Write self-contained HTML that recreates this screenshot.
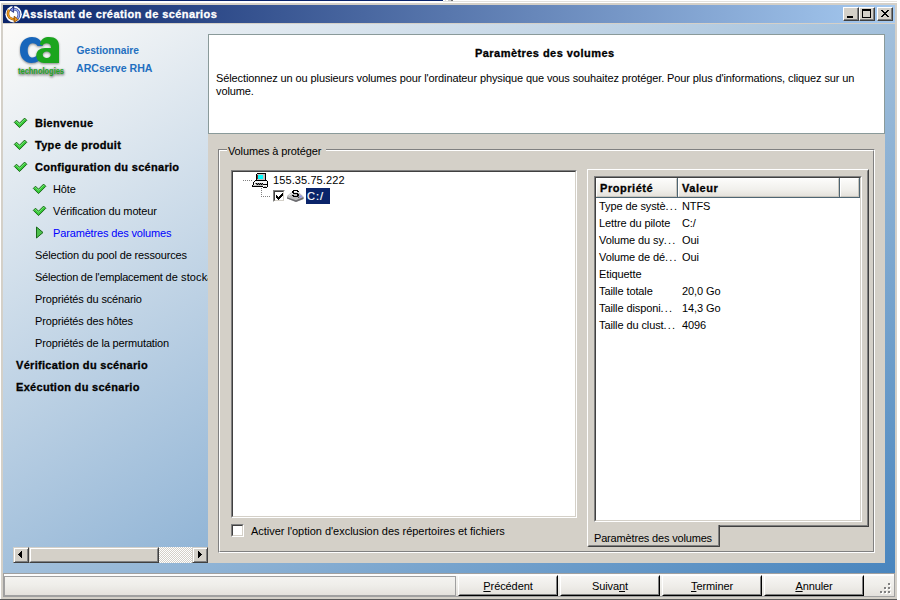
<!DOCTYPE html>
<html><head><meta charset="utf-8">
<style>
*{margin:0;padding:0;box-sizing:border-box}
html,body{width:900px;height:600px;overflow:hidden;background:#fff;position:relative}
body{font-family:"Liberation Sans",sans-serif;font-size:11px;color:#000}
.a{position:absolute}
.t{position:absolute;white-space:nowrap;line-height:13px;font-size:11px}
.b{font-weight:bold;-webkit-text-stroke:0.3px currentColor}
.sbtn{width:16px;height:16px;background:#d4d0c8;border:1px solid;border-color:#d4d0c8 #404040 #404040 #d4d0c8;box-shadow:inset 1px 1px #fff,inset -1px -1px #808080}
.tbtn{width:16px;height:14px;background:#d4d0c8;border:1px solid;border-color:#fff #404040 #404040 #fff;box-shadow:inset -1px -1px #808080}
</style></head><body>
<!-- top stray line -->
<div class="a" style="left:0;top:0;width:443px;height:1px;background:#0a246a"></div>
<div class="a" style="left:445px;top:0;width:1px;height:1px;background:#e0e0e0"></div>
<div class="a" style="left:448px;top:0;width:3px;height:1px;background:#c8c8c8"></div>
<div class="a" style="left:451px;top:0;width:2px;height:1px;background:#707070"></div>
<div class="a" style="left:443px;top:1px;width:454px;height:1px;background:#e4e2de"></div>
<!-- window frame -->
<div class="a" style="left:1px;top:3px;width:896px;height:596px;background:#d4d0c8"></div>
<div class="a" style="left:0;top:599px;width:897px;height:1px;background:#5a5a5a"></div>
<!-- title bar -->
<div class="a" style="left:3px;top:5px;width:892px;height:18px;background:linear-gradient(to right,#0a246a,#a6caf0)"></div>
<!-- client gradient -->
<div class="a" id="client" style="left:3px;top:24px;width:892px;height:549px;background:linear-gradient(to bottom right,#fcfbf9,#4985be)"></div>

<!-- logo -->
<svg class="a" style="left:0;top:24px" width="200" height="70" viewBox="0 24 200 70">
<defs>
<filter id="sh" x="-20%" y="-20%" width="140%" height="140%"><feGaussianBlur stdDeviation="0.9"/></filter>
</defs>
<g transform="translate(0,1)" opacity="0.55" filter="url(#sh)" fill="#333"><path d="M42.7 46 L37.5 46 C36.5 44.3 35 43.3 32.5 43.3 C29.5 43.3 27.7 46.5 27.7 50.4 C27.7 54.5 29.5 57.5 32.5 57.5 C34.5 57.5 36 56.5 37 55 L42.7 55 C41.5 60 37 63 31.5 63 C24.5 63 20 57.5 20 50 C20 42 25 37 32 37 C37.5 37 41.5 40 42.7 46 Z"/><path d="M39.8 44.5 C41 38.5 45 37 49 37 C55.5 37 59 40 59 46 L59 63 L51 63 L51 47.5 C51 44.5 49 43.3 46.5 43.3 C44.5 43.3 43 44.2 42.6 45.8 Z"/><path fill-rule="evenodd" d="M51.5 48.1 L45 48.1 C40 48.1 36.3 51 36.3 55.6 C36.3 60.5 40 63 44 63 L51.5 63 Z M46.8 51.6 C49 51.6 50.8 53 50.8 54.8 C50.8 56.6 49 58 46.8 58 C44.4 58 42.7 56.6 42.7 54.8 C42.7 53 44.4 51.6 46.8 51.6 Z"/></g>
<g fill="#1766bb"><path d="M42.7 46 L37.5 46 C36.5 44.3 35 43.3 32.5 43.3 C29.5 43.3 27.7 46.5 27.7 50.4 C27.7 54.5 29.5 57.5 32.5 57.5 C34.5 57.5 36 56.5 37 55 L42.7 55 C41.5 60 37 63 31.5 63 C24.5 63 20 57.5 20 50 C20 42 25 37 32 37 C37.5 37 41.5 40 42.7 46 Z"/></g>
<g fill="#1ba51e"><path d="M39.8 44.5 C41 38.5 45 37 49 37 C55.5 37 59 40 59 46 L59 63 L51 63 L51 47.5 C51 44.5 49 43.3 46.5 43.3 C44.5 43.3 43 44.2 42.6 45.8 Z"/><path fill-rule="evenodd" d="M51.5 48.1 L45 48.1 C40 48.1 36.3 51 36.3 55.6 C36.3 60.5 40 63 44 63 L51.5 63 Z M46.8 51.6 C49 51.6 50.8 53 50.8 54.8 C50.8 56.6 49 58 46.8 58 C44.4 58 42.7 56.6 42.7 54.8 C42.7 53 44.4 51.6 46.8 51.6 Z"/></g>
<filter id="sh2" x="-20%" y="-50%" width="140%" height="200%"><feGaussianBlur stdDeviation="0.9"/></filter>
<text x="18.5" y="74.5" font-family="Liberation Sans" font-weight="bold" font-size="9.5" textLength="46" lengthAdjust="spacingAndGlyphs" fill="#333" opacity="0.55" filter="url(#sh2)" stroke="#333" stroke-width="1">technologies</text>
<text x="18" y="73.6" font-family="Liberation Sans" font-weight="bold" font-size="9.5" textLength="46" lengthAdjust="spacingAndGlyphs" fill="#22a525">technologies</text>
<text x="76.5" y="54" font-family="Liberation Sans" font-weight="bold" font-size="11.3" textLength="62.5" lengthAdjust="spacingAndGlyphs" fill="#1f6fc0">Gestionnaire</text>
<text x="76" y="71.6" font-family="Liberation Sans" font-weight="bold" font-size="11.5" textLength="76.5" lengthAdjust="spacingAndGlyphs" fill="#1f6fc0">ARCserve RHA</text>
</svg>
<!-- left nav -->
<div class="t b" style="left:35px;top:117px;color:#000;letter-spacing:0.3px">Bienvenue</div>
<svg class="a" style="left:12px;top:117px" width="16" height="14" viewBox="0 0 16 14"><path d="M2.3 5.4 L4.5 3.2 L7.5 6.2 L12.6 1.1 L14.8 3.3 L7.5 10.6 Z" fill="#36c836" stroke="#1b6b1b" stroke-width="1" stroke-linejoin="miter"/><path d="M3.6 5.3 L4.5 4.4 L7.5 7.4 L12.6 2.3 L13.4 3.1" fill="none" stroke="#80ea80" stroke-width="0.9"/></svg>
<div class="t b" style="left:35px;top:139px;color:#000;letter-spacing:0.3px">Type de produit</div>
<svg class="a" style="left:12px;top:139px" width="16" height="14" viewBox="0 0 16 14"><path d="M2.3 5.4 L4.5 3.2 L7.5 6.2 L12.6 1.1 L14.8 3.3 L7.5 10.6 Z" fill="#36c836" stroke="#1b6b1b" stroke-width="1" stroke-linejoin="miter"/><path d="M3.6 5.3 L4.5 4.4 L7.5 7.4 L12.6 2.3 L13.4 3.1" fill="none" stroke="#80ea80" stroke-width="0.9"/></svg>
<div class="t b" style="left:35px;top:161px;color:#000;letter-spacing:0.3px">Configuration du scénario</div>
<svg class="a" style="left:12px;top:161px" width="16" height="14" viewBox="0 0 16 14"><path d="M2.3 5.4 L4.5 3.2 L7.5 6.2 L12.6 1.1 L14.8 3.3 L7.5 10.6 Z" fill="#36c836" stroke="#1b6b1b" stroke-width="1" stroke-linejoin="miter"/><path d="M3.6 5.3 L4.5 4.4 L7.5 7.4 L12.6 2.3 L13.4 3.1" fill="none" stroke="#80ea80" stroke-width="0.9"/></svg>
<div class="t" style="left:53px;top:183px;color:#000;letter-spacing:-0.15px">Hôte</div>
<svg class="a" style="left:31px;top:183px" width="16" height="14" viewBox="0 0 16 14"><path d="M2.3 5.4 L4.5 3.2 L7.5 6.2 L12.6 1.1 L14.8 3.3 L7.5 10.6 Z" fill="#36c836" stroke="#1b6b1b" stroke-width="1" stroke-linejoin="miter"/><path d="M3.6 5.3 L4.5 4.4 L7.5 7.4 L12.6 2.3 L13.4 3.1" fill="none" stroke="#80ea80" stroke-width="0.9"/></svg>
<div class="t" style="left:53px;top:205px;color:#000;letter-spacing:-0.15px">Vérification du moteur</div>
<svg class="a" style="left:31px;top:205px" width="16" height="14" viewBox="0 0 16 14"><path d="M2.3 5.4 L4.5 3.2 L7.5 6.2 L12.6 1.1 L14.8 3.3 L7.5 10.6 Z" fill="#36c836" stroke="#1b6b1b" stroke-width="1" stroke-linejoin="miter"/><path d="M3.6 5.3 L4.5 4.4 L7.5 7.4 L12.6 2.3 L13.4 3.1" fill="none" stroke="#80ea80" stroke-width="0.9"/></svg>
<div class="t" style="left:53px;top:227px;color:#0000ff;letter-spacing:-0.15px">Paramètres des volumes</div>
<svg class="a" style="left:35px;top:226px" width="10" height="14" viewBox="0 0 10 14"><path d="M1.5 1 L8 6.5 L1.5 12 Z" fill="#4cc04c" stroke="#186818" stroke-width="1"/></svg>
<div class="t" style="left:35px;top:249px;color:#000;letter-spacing:-0.15px">Sélection du pool de ressources</div>
<div class="t" style="left:35px;top:271px;color:#000;letter-spacing:-0.25px">Sélection de l'emplacement <span style="letter-spacing:0.1px">de stockage</span></div>
<div class="t" style="left:35px;top:293px;color:#000;letter-spacing:-0.15px">Propriétés du scénario</div>
<div class="t" style="left:35px;top:315px;color:#000;letter-spacing:-0.15px">Propriétés des hôtes</div>
<div class="t" style="left:35px;top:337px;color:#000;letter-spacing:-0.15px">Propriétés de la permutation</div>
<div class="t b" style="left:16px;top:359px;color:#000;letter-spacing:0.3px">Vérification du scénario</div>
<div class="t b" style="left:16px;top:381px;color:#000;letter-spacing:0.3px">Exécution du scénario</div>
<!-- header box -->
<div class="a" style="left:208px;top:34px;width:677px;height:100px;background:#fff;border:1px solid #8a9a9a"></div>
<!-- gray panel -->
<div class="a" style="left:208px;top:134px;width:677px;height:429px;background:#d4d0c8"></div>

<!-- header text -->
<div class="t b" style="left:475px;top:47px;letter-spacing:0.45px">Paramètres des volumes</div>
<div class="t" style="left:216px;top:72px;letter-spacing:-0.11px">Sélectionnez un ou plusieurs volumes pour l'ordinateur physique que vous souhaitez protéger. Pour plus d'informations, cliquez sur un</div>
<div class="t" style="left:216px;top:85px;letter-spacing:-0.11px">volume.</div>
<!-- group box -->
<div class="a" style="left:218px;top:149px;width:657px;height:404px;border:1px solid #808080;border-right-color:#fff;border-bottom-color:#fff"></div>
<div class="a" style="left:219px;top:150px;width:655px;height:402px;border:1px solid #fff;border-right-color:#808080;border-bottom-color:#808080"></div>
<div class="a" style="left:227px;top:146px;width:99px;height:8px;background:#d4d0c8"></div>
<div class="t" style="left:228px;top:145px;letter-spacing:-0.12px">Volumes à protéger</div>
<!-- tree view -->
<div class="a" style="left:231px;top:170px;width:346px;height:348px;background:#fff;border:1px solid;border-color:#808080 #fff #fff #808080"></div>
<div class="a" style="left:232px;top:171px;width:344px;height:346px;border:1px solid;border-color:#404040 #d4d0c8 #d4d0c8 #404040"></div>
<!-- checkbox exclude -->
<div class="a" style="left:231px;top:524px;width:13px;height:13px;background:#fff;border:1px solid;border-color:#808080 #fff #fff #808080"></div>
<div class="a" style="left:232px;top:525px;width:11px;height:11px;border:1px solid;border-color:#404040 #d4d0c8 #d4d0c8 #404040"></div>
<div class="t" style="left:251px;top:525px;letter-spacing:-0.02px">Activer l'option d'exclusion des répertoires et fichiers</div>
<!-- tree content -->
<svg class="a" style="left:240px;top:172px" width="40" height="30" viewBox="240 172 40 30" shape-rendering="crispEdges">
<g fill="#808080">
<rect x="243" y="180" width="1" height="1"/><rect x="245" y="180" width="1" height="1"/><rect x="247" y="180" width="1" height="1"/><rect x="249" y="180" width="1" height="1"/><rect x="251" y="180" width="1" height="1"/>
<rect x="261" y="188" width="1" height="1"/><rect x="261" y="190" width="1" height="1"/><rect x="261" y="192" width="1" height="1"/><rect x="261" y="194" width="1" height="1"/><rect x="261" y="196" width="1" height="1"/>
<rect x="263" y="196" width="1" height="1"/><rect x="265" y="196" width="1" height="1"/><rect x="267" y="196" width="1" height="1"/><rect x="269" y="196" width="1" height="1"/>
</g>
</svg>
<!-- computer icon -->
<svg class="a" style="left:250px;top:171px" width="18" height="17" viewBox="0 0 18 17" shape-rendering="crispEdges"><path d="M7 2h1v1h-1zM8 2h1v1h-1zM9 2h1v1h-1zM10 2h1v1h-1zM11 2h1v1h-1zM12 2h1v1h-1zM13 2h1v1h-1zM14 2h1v1h-1zM15 2h1v1h-1zM6 3h1v1h-1zM15 3h1v1h-1zM6 4h1v1h-1zM15 4h1v1h-1zM6 5h1v1h-1zM15 5h1v1h-1zM6 6h1v1h-1zM15 6h1v1h-1zM6 7h1v1h-1zM15 7h1v1h-1zM6 8h1v1h-1zM15 8h1v1h-1zM5 9h1v1h-1zM6 9h1v1h-1zM7 9h1v1h-1zM8 9h1v1h-1zM9 9h1v1h-1zM10 9h1v1h-1zM11 9h1v1h-1zM12 9h1v1h-1zM13 9h1v1h-1zM14 9h1v1h-1zM15 9h1v1h-1zM16 9h1v1h-1zM4 10h1v1h-1zM17 10h1v1h-1zM3 11h1v1h-1zM17 11h1v1h-1zM3 12h1v1h-1zM6 12h1v1h-1zM8 12h1v1h-1zM10 12h1v1h-1zM12 12h1v1h-1zM17 12h1v1h-1zM3 13h1v1h-1zM7 13h1v1h-1zM9 13h1v1h-1zM11 13h1v1h-1zM13 13h1v1h-1zM14 13h1v1h-1zM15 13h1v1h-1zM16 13h1v1h-1zM17 13h1v1h-1zM2 14h1v1h-1zM17 14h1v1h-1zM2 15h1v1h-1zM3 15h1v1h-1zM4 15h1v1h-1zM5 15h1v1h-1zM6 15h1v1h-1zM7 15h1v1h-1zM8 15h1v1h-1zM9 15h1v1h-1zM10 15h1v1h-1zM11 15h1v1h-1zM12 15h1v1h-1zM17 15h1v1h-1zM13 16h1v1h-1zM14 16h1v1h-1zM15 16h1v1h-1zM16 16h1v1h-1z" fill="#000"/><path d="M7 3h1v1h-1zM8 3h1v1h-1zM9 3h1v1h-1zM10 3h1v1h-1zM11 3h1v1h-1zM12 3h1v1h-1zM13 3h1v1h-1zM14 3h1v1h-1zM13 4h1v1h-1zM14 4h1v1h-1zM13 5h1v1h-1zM14 5h1v1h-1zM13 6h1v1h-1zM14 6h1v1h-1zM13 7h1v1h-1zM14 7h1v1h-1zM7 8h1v1h-1zM8 8h1v1h-1zM9 8h1v1h-1zM10 8h1v1h-1zM11 8h1v1h-1zM12 8h1v1h-1zM13 8h1v1h-1zM14 8h1v1h-1zM3 14h1v1h-1zM4 14h1v1h-1zM5 14h1v1h-1zM6 14h1v1h-1zM7 14h1v1h-1zM8 14h1v1h-1zM9 14h1v1h-1zM10 14h1v1h-1zM11 14h1v1h-1zM12 14h1v1h-1zM14 15h1v1h-1zM15 15h1v1h-1z" fill="#c0c0c0"/><path d="M7 4h1v1h-1zM7 5h1v1h-1zM7 6h1v1h-1zM7 7h1v1h-1z" fill="#6a3030"/><path d="M8 4h1v1h-1zM9 4h1v1h-1zM10 4h1v1h-1zM11 4h1v1h-1zM12 4h1v1h-1zM8 5h1v1h-1zM9 5h1v1h-1zM10 5h1v1h-1zM11 5h1v1h-1zM12 5h1v1h-1zM8 6h1v1h-1zM9 6h1v1h-1zM10 6h1v1h-1zM11 6h1v1h-1zM12 6h1v1h-1zM8 7h1v1h-1zM9 7h1v1h-1zM10 7h1v1h-1zM11 7h1v1h-1zM12 7h1v1h-1z" fill="#00ffff"/><path d="M5 10h1v1h-1zM6 10h1v1h-1zM7 10h1v1h-1zM8 10h1v1h-1zM9 10h1v1h-1zM10 10h1v1h-1zM11 10h1v1h-1zM12 10h1v1h-1zM13 10h1v1h-1zM14 10h1v1h-1zM15 10h1v1h-1zM16 10h1v1h-1zM4 11h1v1h-1zM5 11h1v1h-1zM6 11h1v1h-1zM7 11h1v1h-1zM8 11h1v1h-1zM9 11h1v1h-1zM10 11h1v1h-1zM11 11h1v1h-1zM12 11h1v1h-1zM13 11h1v1h-1zM14 11h1v1h-1zM15 11h1v1h-1zM16 11h1v1h-1zM4 12h1v1h-1zM13 12h1v1h-1zM14 12h1v1h-1zM15 12h1v1h-1zM16 12h1v1h-1zM4 13h1v1h-1zM5 13h1v1h-1zM13 14h1v1h-1zM14 14h1v1h-1zM15 14h1v1h-1zM16 14h1v1h-1zM13 15h1v1h-1zM16 15h1v1h-1z" fill="#f4f4f4"/><path d="M5 12h1v1h-1zM7 12h1v1h-1zM9 12h1v1h-1zM11 12h1v1h-1zM6 13h1v1h-1zM8 13h1v1h-1zM10 13h1v1h-1zM12 13h1v1h-1z" fill="#808080"/></svg>
<div class="t" style="left:273px;top:174px;letter-spacing:0.1px">155.35.75.222</div>
<!-- tree checkbox -->
<div class="a" style="left:273px;top:190px;width:12px;height:12px;background:#fff;border:1px solid;border-color:#808080 #fff #fff #808080"></div>
<div class="a" style="left:274px;top:191px;width:10px;height:10px;border:1px solid;border-color:#404040 #d4d0c8 #d4d0c8 #404040"></div>
<svg class="a" style="left:276px;top:193px" width="8" height="8" viewBox="0 0 8 8" shape-rendering="crispEdges"><path d="M0 3h1v1h-1zM1 4h1v1h-1zM2 5h1v1h-1zM6 0h1v1h-1zM5 1h1v1h-1zM4 2h1v1h-1zM3 3h1v1h-1z M0 2h1v1h-1zM1 3h1v1h-1zM2 4h1v1h-1zM6 1h1v1h-1zM5 2h1v1h-1zM4 3h1v1h-1zM3 4h1v1h-1z M0 4h1v1h-1zM1 5h1v1h-1zM2 6h1v1h-1zM3 5h1v1h-1zM4 4h1v1h-1zM5 3h1v1h-1zM6 2h1v1h-1z" fill="#000"/></svg>
<!-- disk icon -->
<svg class="a" style="left:285px;top:186px" width="20" height="18" viewBox="285 186 20 18">
<path d="M287 196 L291 192.5 L299 192.5 L303.5 196.5 L303.5 199 L296 202 L287 198.5 Z" fill="#bdbdbd"/>
<path d="M287 197.2 L296 200.2 L303.5 197 L303.5 199 L296 202 L287 198.6 Z" fill="#6c6c70"/>
<path d="M289 195.5 L292 193.5 L298 193.5" fill="none" stroke="#e8e8e8" stroke-width="1"/>
<rect x="299.5" y="195.5" width="2.2" height="2" fill="#8f90e8"/>
<rect x="298" y="196.5" width="1.2" height="1.5" fill="#404040"/>
<path d="M293 190h1v1h-1zM294 190h1v1h-1zM295 190h1v1h-1zM296 190h1v1h-1zM297 190h1v1h-1zM292 191h1v1h-1zM293 191h1v1h-1zM297 191h1v1h-1zM298 191h1v1h-1zM292 192h1v1h-1zM293 192h1v1h-1zM293 193h1v1h-1zM294 193h1v1h-1zM295 193h1v1h-1zM296 193h1v1h-1zM297 193h1v1h-1zM297 194h1v1h-1zM298 194h1v1h-1zM292 195h1v1h-1zM293 195h1v1h-1zM297 195h1v1h-1zM298 195h1v1h-1zM293 196h1v1h-1zM294 196h1v1h-1zM295 196h1v1h-1zM296 196h1v1h-1zM297 196h1v1h-1z" fill="#000" shape-rendering="crispEdges"/>
</svg>
<div class="a" style="left:306px;top:188px;width:24px;height:16px;background:#0a246a"></div>
<div class="t" style="left:307px;top:190px;color:#fff;letter-spacing:1px;-webkit-text-stroke:0.2px #fff">C:/</div>
<!-- tab control -->
<div class="a" style="left:587px;top:169px;width:282px;height:358px;border:1px solid;border-color:#fff #404040 #404040 #fff"></div>
<div class="a" style="left:588px;top:170px;width:280px;height:356px;border:1px solid;border-color:#d4d0c8 #808080 #808080 #d4d0c8"></div>
<!-- selected tab -->
<div class="a" style="left:587px;top:525px;width:133px;height:22px;background:#d4d0c8;border:1px solid;border-top:0;border-color:#d4d0c8 #404040 #404040 #fff;border-bottom-left-radius:2px;border-bottom-right-radius:1px"></div>
<div class="a" style="left:588px;top:525px;width:131px;height:21px;border:1px solid;border-color:#d4d0c8 #808080 #808080 #d4d0c8;border-top:0"></div>
<div class="t" style="left:594px;top:532px;letter-spacing:-0.17px">Paramètres des volumes</div>
<!-- list view -->
<div class="a" style="left:594px;top:176px;width:268px;height:346px;background:#fff;border:1px solid;border-color:#808080 #fff #fff #808080"></div>
<div class="a" style="left:595px;top:177px;width:266px;height:344px;border:1px solid;border-color:#404040 #d4d0c8 #d4d0c8 #404040"></div>
<!-- header -->
<div class="a" style="left:596px;top:178px;width:264px;height:19px;background:linear-gradient(#fdfdfc,#f1f0ec 60%,#e3e0da)"></div>
<div class="a" style="left:596px;top:197px;width:264px;height:1px;background:#4e6572"></div>
<div class="a" style="left:596px;top:178px;width:81px;height:19px;border:1px solid;border-color:#fff #c8c5bd #c8c5bd #fff"></div>
<div class="a" style="left:677px;top:178px;width:1px;height:19px;background:#4e6572"></div>
<div class="a" style="left:678px;top:178px;width:161px;height:19px;border:1px solid;border-color:#fff #c8c5bd #c8c5bd #fff"></div>
<div class="a" style="left:839px;top:178px;width:1px;height:19px;background:#4e6572"></div>
<div class="a" style="left:840px;top:178px;width:19px;height:19px;border:1px solid;border-color:#fff #c8c5bd #c8c5bd #fff"></div>
<div class="a" style="left:859px;top:178px;width:1px;height:20px;background:#4e6572"></div>
<div class="t b" style="left:600px;top:182px;letter-spacing:0.55px">Propriété</div>
<div class="t b" style="left:682px;top:182px;letter-spacing:0.55px">Valeur</div>
<div class="t" style="left:599px;top:200px;letter-spacing:-0.1px">Type de systè<span style="letter-spacing:1.2px">...</span></div>
<div class="t" style="left:682px;top:200px;letter-spacing:-0.1px">NTFS</div>
<div class="t" style="left:599px;top:217px;letter-spacing:-0.1px">Lettre du pilote</div>
<div class="t" style="left:682px;top:217px;letter-spacing:-0.1px">C:/</div>
<div class="t" style="left:599px;top:234px;letter-spacing:-0.1px">Volume du sy<span style="letter-spacing:1.2px">...</span></div>
<div class="t" style="left:682px;top:234px;letter-spacing:-0.1px">Oui</div>
<div class="t" style="left:599px;top:251px;letter-spacing:-0.1px">Volume de dé<span style="letter-spacing:1.2px">...</span></div>
<div class="t" style="left:682px;top:251px;letter-spacing:-0.1px">Oui</div>
<div class="t" style="left:599px;top:268px;letter-spacing:-0.1px">Etiquette</div>
<div class="t" style="left:599px;top:285px;letter-spacing:-0.1px">Taille totale</div>
<div class="t" style="left:682px;top:285px;letter-spacing:-0.1px">20,0 Go</div>
<div class="t" style="left:599px;top:302px;letter-spacing:-0.1px">Taille disponi<span style="letter-spacing:1.2px">...</span></div>
<div class="t" style="left:682px;top:302px;letter-spacing:-0.1px">14,3 Go</div>
<div class="t" style="left:599px;top:319px;letter-spacing:-0.1px">Taille du clust<span style="letter-spacing:1.2px">...</span></div>
<div class="t" style="left:682px;top:319px;letter-spacing:-0.1px">4096</div>
<!-- status strip -->
<div class="a" style="left:3px;top:573px;width:892px;height:24px;background:linear-gradient(#f6f5f3,#efeeea 50%,#e3e0db);border:1px solid #a0a0a0;border-right-color:#a0a0a0"></div>
<div class="a" style="left:4px;top:574px;width:890px;height:2px;background:#fdfdfd"></div>
<div class="a" style="left:4px;top:576px;width:452px;height:20px;border:1px solid #a0a0a0;border-left-width:1px"></div>
<div class="a" style="left:458px;top:575px;width:100px;height:21px;border:1px solid;border-color:#fff #000 #000 #fff;background:linear-gradient(#f7f6f4,#eeece8 55%,#e4e1dc)"></div>
<div class="a" style="left:459px;top:576px;width:98px;height:19px;border:1px solid;border-color:transparent #808080 #808080 transparent"></div>
<div class="t" style="left:458px;top:580px;width:100px;text-align:center;letter-spacing:-0.1px"><u>P</u>récédent</div>
<div class="a" style="left:560px;top:575px;width:100px;height:21px;border:1px solid;border-color:#fff #000 #000 #fff;background:linear-gradient(#f7f6f4,#eeece8 55%,#e4e1dc)"></div>
<div class="a" style="left:561px;top:576px;width:98px;height:19px;border:1px solid;border-color:transparent #808080 #808080 transparent"></div>
<div class="t" style="left:560px;top:580px;width:100px;text-align:center;letter-spacing:-0.1px">Suiva<u>n</u>t</div>
<div class="a" style="left:662px;top:575px;width:100px;height:21px;border:1px solid;border-color:#fff #000 #000 #fff;background:linear-gradient(#f7f6f4,#eeece8 55%,#e4e1dc)"></div>
<div class="a" style="left:663px;top:576px;width:98px;height:19px;border:1px solid;border-color:transparent #808080 #808080 transparent"></div>
<div class="t" style="left:662px;top:580px;width:100px;text-align:center;letter-spacing:-0.1px"><u>T</u>erminer</div>
<div class="a" style="left:764px;top:575px;width:100px;height:21px;border:1px solid;border-color:#fff #000 #000 #fff;background:linear-gradient(#f7f6f4,#eeece8 55%,#e4e1dc)"></div>
<div class="a" style="left:765px;top:576px;width:98px;height:19px;border:1px solid;border-color:transparent #808080 #808080 transparent"></div>
<div class="t" style="left:764px;top:580px;width:100px;text-align:center;letter-spacing:-0.1px"><u>A</u>nnuler</div>

<svg class="a" style="left:878px;top:581px" width="14" height="14" viewBox="0 0 14 14" shape-rendering="crispEdges">
<g fill="#fff"><rect x="11" y="3" width="2" height="2"/><rect x="7" y="7" width="2" height="2"/><rect x="11" y="7" width="2" height="2"/><rect x="3" y="11" width="2" height="2"/><rect x="7" y="11" width="2" height="2"/><rect x="11" y="11" width="2" height="2"/></g>
<g fill="#808080"><rect x="10" y="2" width="2" height="2"/><rect x="6" y="6" width="2" height="2"/><rect x="10" y="6" width="2" height="2"/><rect x="2" y="10" width="2" height="2"/><rect x="6" y="10" width="2" height="2"/><rect x="10" y="10" width="2" height="2"/></g>
</svg>
<!-- left scrollbar -->
<div class="a" style="left:13px;top:547px;width:195px;height:16px;background-color:#fff;background-image:repeating-conic-gradient(#d4d0c8 0 25%,#fff 0 50%);background-size:2px 2px"></div>
<div class="a sbtn" style="left:13px;top:547px"></div>
<div class="a sbtn" style="left:192px;top:547px"></div>
<div class="a" style="left:29px;top:547px;width:130px;height:16px;background:#d4d0c8;border:1px solid;border-color:#d4d0c8 #404040 #404040 #d4d0c8"></div>
<div class="a" style="left:30px;top:548px;width:128px;height:14px;border:1px solid;border-color:#fff #808080 #808080 #fff"></div>
<svg class="a" style="left:13px;top:547px" width="16" height="16" viewBox="0 0 16 16" shape-rendering="crispEdges"><path d="M5 7h1v1h-1zM6 6h1v3h-1zM7 5h1v5h-1zM8 4h1v7h-1z" fill="#000"/></svg>
<svg class="a" style="left:192px;top:547px" width="16" height="16" viewBox="0 0 16 16" shape-rendering="crispEdges"><path d="M6 4h1v7h-1zM7 5h1v5h-1zM8 6h1v3h-1zM9 7h1v1h-1z" fill="#000"/></svg>
<!-- title bar -->
<div class="t b" style="left:22px;top:8px;color:#fff;letter-spacing:0.4px">Assistant de création de scénarios</div>
<div class="a tbtn" style="left:843px;top:7px"></div>
<div class="a tbtn" style="left:859px;top:7px"></div>
<div class="a tbtn" style="left:877px;top:7px"></div>
<svg class="a" style="left:843px;top:7px" width="52" height="14" viewBox="843 7 52 14" shape-rendering="crispEdges">
<rect x="847" y="16" width="6" height="2" fill="#000"/>
<rect x="862" y="9" width="8" height="8" fill="none" stroke="#000" stroke-width="1" transform="translate(0.5,0.5)"/>
<rect x="862" y="9" width="9" height="2" fill="#000"/>
<path d="M881 10h2v1h-2zM887 10h2v1h-2zM882 11h2v1h-2zM886 11h2v1h-2zM883 12h4v1h-4zM884 13h2v1h-2zM883 14h4v1h-4zM882 15h2v1h-2zM886 15h2v1h-2zM881 16h2v1h-2zM887 16h2v1h-2z" fill="#000"/>
</svg>
<!-- title icon -->
<svg class="a" style="left:3px;top:3px" width="20" height="20" viewBox="0 0 20 20">
<circle cx="10.6" cy="11.2" r="8.2" fill="#fff"/>
<rect x="9.6" y="2.5" width="1.6" height="3.2" fill="#0a246a"/>
<path d="M6 6.8 Q3.6 11.3 6.6 14.6 Q8.6 16.4 11.6 16.4" fill="none" stroke="#9a5a08" stroke-width="2.6"/>
<path d="M6 6.8 Q3.6 11.3 6.6 14.6 Q8.6 16.4 11.6 16.4" fill="none" stroke="#f5a020" stroke-width="1.3"/>
<path d="M11.2 13.3 L15.3 16.4 L11.2 19.2 Z" fill="#f39a1c" stroke="#8a4a00" stroke-width="0.9"/>
<path d="M10 6.6 Q13.6 5.4 15.4 8.6 Q16.8 12 14.6 15.6" fill="none" stroke="#2a3a8a" stroke-width="2.6"/>
<path d="M10 6.6 Q13.6 5.4 15.4 8.6 Q16.8 12 14.6 15.6" fill="none" stroke="#a0b0f4" stroke-width="1.3"/>
<path d="M10.6 3.8 L6.8 6.8 L10.6 9.4 Z" fill="#7d8fe0" stroke="#22307a" stroke-width="0.9"/>
</svg>
</body></html>
